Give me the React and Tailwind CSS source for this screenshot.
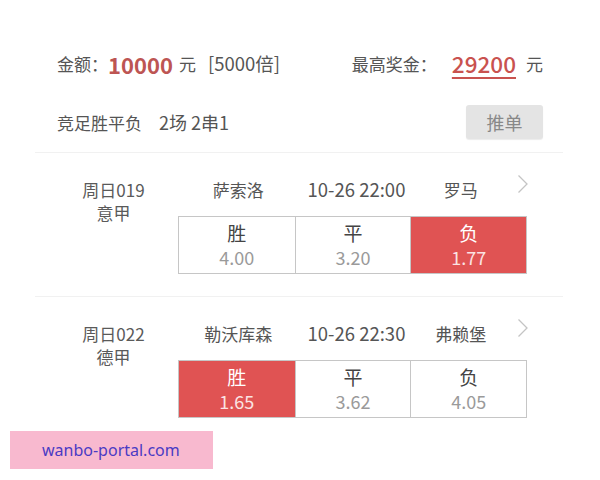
const font = { fontFamily: '"Noto Sans CJK SC", "Noto Sans", sans-serif' };

const matches = [
  {
    no: '周日019',
    league: '意甲',
    home: '萨索洛',
    time: '10-26 22:00',
    away: '罗马',
    odds: [
      { label: '胜', value: '4.00' },
      { label: '平', value: '3.20' },
      { label: '负', value: '1.77', on: true },
    ],
  },
  {
    no: '周日022',
    league: '德甲',
    home: '勒沃库森',
    time: '10-26 22:30',
    away: '弗赖堡',
    odds: [
      { label: '胜', value: '1.65', on: true },
      { label: '平', value: '3.62' },
      { label: '负', value: '4.05' },
    ],
  },
];

function Chevron() {
  return (
    <svg width="12" height="20" viewBox="0 0 12 20" fill="none">
      <path d="M1.5 1.5 L10 10 L1.5 18.5" stroke="#c4c4c4" strokeWidth="1.3" />
    </svg>
  );
}

function MatchRow({ m, last }) {
  return (
    <div className={'flex pt-[23px] pb-[22px] ml-[35px] mr-[37px] ' + (last ? '' : 'border-b border-[#f1f1f1]')}>
      <div className="w-[143px] flex flex-col items-center pt-[2px] pl-[14px] text-[17px] leading-[23px] text-[#5a5a5a]">
        <span>{m.no}</span>
        <span>{m.league}</span>
      </div>
      <div className="w-[349px]">
        <div className="relative grid grid-cols-3 h-[26px] items-center text-[17px] text-[#555]">
          <span className="text-center pl-[4px]">{m.home}</span>
          <span className="text-center pl-[8px] text-[18.5px]">{m.time}</span>
          <span className="text-center pr-[16px]">{m.away}</span>
          <span className="absolute right-[-2px] top-[-2px]">
            <Chevron />
          </span>
        </div>
        <div className="mt-[14px] grid grid-cols-3 h-[58px] border border-[#c6c6c6]">
          {m.odds.map((o, i) => (
            <div
              key={i}
              className={
                'flex flex-col items-center pt-[4px] ' +
                (i > 0 ? 'border-l border-[#c6c6c6] ' : '') +
                (o.on ? 'bg-[#e05353]' : 'bg-white')
              }
            >
              <span className={'text-[19px] leading-[24px] ' + (o.on ? 'text-white' : 'text-[#444]')}>{o.label}</span>
              <span className={'text-[18px] leading-[24px] ' + (o.on ? 'text-[#fbe3e3]' : 'text-[#9a9a9a]')}>{o.value}</span>
            </div>
          ))}
        </div>
      </div>
    </div>
  );
}

export default function App() {
  return (
    <div className="relative w-[600px] h-[480px] bg-white overflow-hidden" style={font}>
      <div className="px-[57px] pt-[51px]">
        <div className="flex items-center justify-between h-[26px] text-[17px] text-[#555]">
          <div className="flex items-center">
            <span>金额：</span>
            <span className="text-[22px] font-bold text-[#bd5553]">10000</span>
            <span className="ml-[6px]">元</span>
            <span className="ml-[12px] text-[18.5px]">[5000倍]</span>
          </div>
          <div className="flex items-center">
            <span>最高奖金：</span>
            <span className="text-[22.5px] font-medium text-[#c9524f] underline underline-offset-[4px] decoration-[2px] ml-[15px]">29200</span>
            <span className="ml-[10px]">元</span>
          </div>
        </div>
        <div className="mt-[28px] flex items-center justify-between h-[34px] text-[17px] text-[#555]">
          <span>
            竞足胜平负<span className="ml-[17px] text-[18px]">2场 2串1</span>
          </span>
          <span className="w-[77px] h-[34px] bg-[#e4e4e4] rounded-[3px] flex items-center justify-center text-[18px] text-[#888] shadow-[0_1px_1px_rgba(0,0,0,0.08)]">
            推单
          </span>
        </div>
      </div>
      <div className="mt-[13px] ml-[35px] mr-[37px] border-b border-[#f1f1f1]"></div>
      {matches.map((m, i) => (
        <MatchRow key={i} m={m} last={i === matches.length - 1} />
      ))}
      <div className="absolute left-[10px] top-[431px] w-[203px] h-[38px] bg-[#f8b9cf] flex items-center pl-[32px] text-[16px] text-[#4a3bc4]" style={{ fontFamily: '"Noto Sans", sans-serif' }}>
        wanbo-portal.com
      </div>
    </div>
  );
}
